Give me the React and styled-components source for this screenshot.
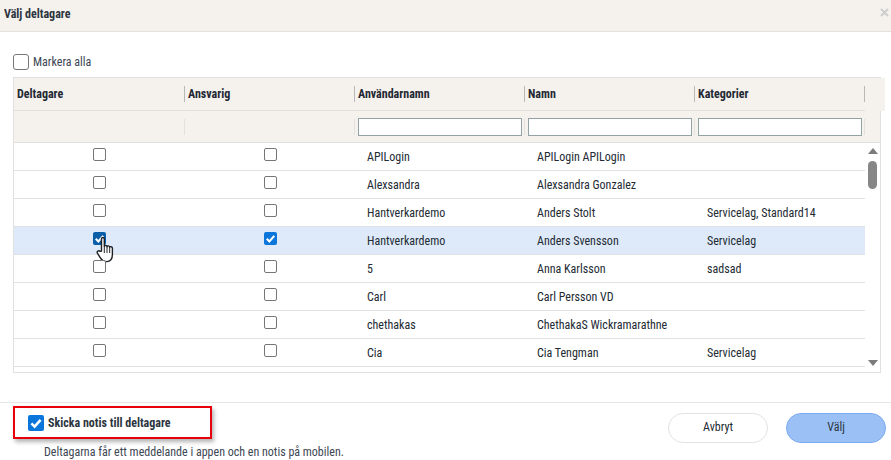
import React from "react"
import styled, { createGlobalStyle } from "styled-components"

const users = [
  { user: "APILogin", name: "APILogin APILogin", cat: "" },
  { user: "Alexsandra", name: "Alexsandra Gonzalez", cat: "" },
  { user: "Hantverkardemo", name: "Anders Stolt", cat: "Servicelag, Standard14" },
  { user: "Hantverkardemo", name: "Anders Svensson", cat: "Servicelag", selected: true },
  { user: "5", name: "Anna Karlsson", cat: "sadsad" },
  { user: "Carl", name: "Carl Persson VD", cat: "" },
  { user: "chethakas", name: "ChethakaS Wickramarathne", cat: "" },
  { user: "Cia", name: "Cia Tengman", cat: "Servicelag" },
]

const headers = ["Deltagare", "Ansvarig", "Användarnamn", "Namn", "Kategorier"]

const CheckMark = ({ size }) => (
  <svg width={size} height={size} viewBox="0 0 16 16">
    <path d="M3.4 8.4 6.6 11.6 12.6 4.8" fill="none" stroke="#fff" strokeWidth="2.6" />
  </svg>
)

const HandCursor = () => (
  <svg width="18" height="27" viewBox="0 0 18 27">
    <path
      d="M5.5 15V3.2C5.5 .9 8.3 .9 8.3 3.2V10.5C8.6 9 10.9 9 11 10.8 11.3 9.4 13.6 9.6 13.7 11.4 14.1 10.2 16.4 10.5 16.4 12.3V18.5C16.4 22.5 14.4 25.6 10.6 25.6 7.2 25.6 5.8 24.2 4.2 21.6L1.4 17.2C.5 15.6 2.7 14 4 15.4Z"
      fill="#fff"
      stroke="#1e2226"
      strokeWidth="1.4"
      strokeLinejoin="round"
    />
    <path d="M8.3 11v6M11 11v6M13.7 11.5V17" stroke="#1e2226" strokeWidth="1" fill="none" />
  </svg>
)

const CloseIcon = () => (
  <svg width="9" height="9" viewBox="0 0 9 9">
    <path d="M1 1 8 8M8 1 1 8" stroke="#cfcfcf" strokeWidth="2.2" />
  </svg>
)

export default function App() {
  return (
    <>
      <GlobalStyle />
      <Dialog>
        <Header>
          <Title>Välj deltagare</Title>
          <CloseIcon />
        </Header>
        <Body>
          <SelectAll>
            <LargeBox />
            Markera alla
          </SelectAll>
          <Table>
            <HeaderRow>
              {headers.map((h) => (
                <HeaderCell key={h}>{h}</HeaderCell>
              ))}
            </HeaderRow>
            <FilterRow>
              <FilterCell />
              <FilterCell />
              <FilterCell><FilterInput /></FilterCell>
              <FilterCell><FilterInput /></FilterCell>
              <FilterCell><FilterInput /></FilterCell>
            </FilterRow>
            <Scroller>
              <Rows>
                {users.map((u) => (
                  <Row key={u.name} $selected={u.selected}>
                    <CheckCell>
                      <RowBox $checked={u.selected} $dark>
                        {u.selected && <CheckMark size={13} />}
                        {u.selected && (
                          <CursorSpot>
                            <HandCursor />
                          </CursorSpot>
                        )}
                      </RowBox>
                    </CheckCell>
                    <CheckCell>
                      <RowBox $checked={u.selected}>
                        {u.selected && <CheckMark size={13} />}
                      </RowBox>
                    </CheckCell>
                    <TextCell>{u.user}</TextCell>
                    <TextCell>{u.name}</TextCell>
                    <TextCell>{u.cat}</TextCell>
                  </Row>
                ))}
              </Rows>
              <ScrollTrack>
                <ArrowUp />
                <Thumb />
                <ArrowDown />
              </ScrollTrack>
            </Scroller>
          </Table>
        </Body>
        <Footer>
          <NoticeBlock>
            <NoticeBox>
              <BlueBox>
                <CheckMark size={16} />
              </BlueBox>
              Skicka notis till deltagare
            </NoticeBox>
            <NoticeHint>Deltagarna får ett meddelande i appen och en notis på mobilen.</NoticeHint>
          </NoticeBlock>
          <Actions>
            <CancelButton>Avbryt</CancelButton>
            <ChooseButton>Välj</ChooseButton>
          </Actions>
        </Footer>
      </Dialog>
    </>
  )
}

const GlobalStyle = createGlobalStyle`
  html, body {
    margin: 0;
    padding: 0;
    background: #fff;
  }
  body {
    font-family: Roboto, "Liberation Sans", sans-serif;
    font-size: 12px;
    font-stretch: 85%;
    color: #222a33;
  }
`

const Dialog = styled.div`
  width: 891px;
  height: 460px;
  display: flex;
  flex-direction: column;
  overflow: hidden;
`

const Header = styled.div`
  height: 32px;
  flex: none;
  display: flex;
  align-items: center;
  justify-content: space-between;
  padding: 0 2px 7px 4px;
  box-sizing: border-box;
  background: #f5f2ee;
  border-bottom: 1px solid #e3e1de;
`

const Title = styled.div`
  font-weight: 700;
  font-size: 12px;
  color: #2c3540;
  margin-top: 3px;
`

const Body = styled.div`
  height: 370px;
  flex: none;
  padding: 22px 10px 0 13px;
  box-sizing: border-box;
`

const SelectAll = styled.label`
  display: flex;
  align-items: center;
  gap: 4px;
  height: 16px;
  color: #3d4654;
`

const LargeBox = styled.span`
  width: 14px;
  height: 14px;
  background: #fff;
  border: 1px solid #767676;
  border-radius: 3px;
`

const Table = styled.div`
  margin-top: 7px;
  height: 296px;
  box-sizing: border-box;
  border: 1px solid #e0e0e0;
  display: flex;
  flex-direction: column;
`

const HeaderRow = styled.div`
  height: 33px;
  flex: none;
  box-sizing: border-box;
  display: grid;
  grid-template-columns: 171px 170px 170px 170px 170px;
  background: #f5f2ee;
  border-bottom: 1px solid #e0e0de;
  width: 851px;
  box-shadow: 20px 0 0 #f5f2ee;
`

const HeaderCell = styled.div`
  display: flex;
  align-items: center;
  height: 16px;
  margin-top: 8px;
  padding-left: 3px;
  font-weight: 700;
  font-size: 12px;
  color: #1f2833;
  border-right: 1px solid #b8b8b6;
`

const FilterRow = styled.div`
  height: 32px;
  flex: none;
  box-sizing: border-box;
  display: grid;
  grid-template-columns: 171px 170px 170px 170px 170px;
  background: #f5f2ee;
  border-bottom: 1px solid #e0e0e0;
  padding-right: 16px;
`

const FilterCell = styled.div`
  display: flex;
  align-items: center;
  padding: 0 2px 0 3px;
  border-right: 1px solid #e4e2df;
  height: 16px;
  margin-top: 8px;
`

const FilterInput = styled.div`
  width: 100%;
  height: 18px;
  flex: none;
  box-sizing: border-box;
  background: #fff;
  border: 1px solid #93a3a3;
`

const Scroller = styled.div`
  flex: 1;
  min-height: 0;
  display: flex;
`

const Rows = styled.div`
  width: 851px;
  flex: none;
`

const Row = styled.div`
  height: 28px;
  box-sizing: border-box;
  display: grid;
  grid-template-columns: 171px 170px 170px 170px 170px;
  align-items: center;
  background: ${(p) => (p.$selected ? "#deeafa" : "#fff")};
  border-bottom: 1px solid #dfe1e5;
`

const CheckCell = styled.div`
  display: flex;
  justify-content: center;
  padding-bottom: 5px;
`

const RowBox = styled.span`
  position: relative;
  width: 13px;
  height: 13px;
  box-sizing: border-box;
  border-radius: 2px;
  display: flex;
  align-items: center;
  justify-content: center;
  background: ${(p) => (p.$checked ? (p.$dark ? "#0a5ea8" : "#0a76dc") : "#fff")};
  border: ${(p) => (p.$checked ? "0" : "1px solid #767676")};
`

const CursorSpot = styled.span`
  position: absolute;
  left: 3px;
  top: 4px;
  line-height: 0;
`

const TextCell = styled.div`
  padding-left: 12px;
  color: #222a33;
  white-space: nowrap;
`

const ScrollTrack = styled.div`
  flex: 1;
  display: flex;
  flex-direction: column;
  align-items: center;
  padding-top: 5px;
`

const ArrowUp = styled.span`
  width: 0;
  height: 0;
  border-left: 5px solid transparent;
  border-right: 5px solid transparent;
  border-bottom: 6px solid #7b7b7b;
`

const Thumb = styled.span`
  width: 9px;
  height: 28px;
  margin-top: 7px;
  border-radius: 5px;
  background: #868686;
`

const ArrowDown = styled.span`
  width: 0;
  height: 0;
  margin-top: 171px;
  border-left: 5px solid transparent;
  border-right: 5px solid transparent;
  border-top: 6px solid #7b7b7b;
`

const Footer = styled.div`
  flex: 1;
  display: flex;
  justify-content: space-between;
  padding: 3px 5px 0 13px;
  border-top: 1px solid #e6e6e6;
`

const NoticeBlock = styled.div`
  display: flex;
  flex-direction: column;
`

const NoticeBox = styled.label`
  width: 199px;
  height: 33px;
  box-sizing: border-box;
  display: flex;
  align-items: center;
  gap: 4px;
  padding-left: 13px;
  border: 2px solid #e8000b;
  box-shadow: 2px 3px 4px rgba(90, 90, 90, 0.45);
  font-weight: 700;
  color: #2c3540;
`

const BlueBox = styled.span`
  width: 16px;
  height: 16px;
  border-radius: 2px;
  background: #0a76dc;
  line-height: 0;
`

const NoticeHint = styled.div`
  margin: 6px 0 0 31px;
  color: #3d4654;
`

const Actions = styled.div`
  display: flex;
  gap: 18px;
  padding-top: 7px;
`

const CancelButton = styled.div`
  width: 100px;
  height: 30px;
  box-sizing: border-box;
  display: flex;
  align-items: center;
  justify-content: center;
  padding-bottom: 2px;
  border-radius: 15px;
  background: #fff;
  border: 1px solid #e2e2e2;
  color: #222a33;
`

const ChooseButton = styled(CancelButton)`
  background: #9ac0f5;
  border-color: #7dabf0;
  color: #2c3540;
`
